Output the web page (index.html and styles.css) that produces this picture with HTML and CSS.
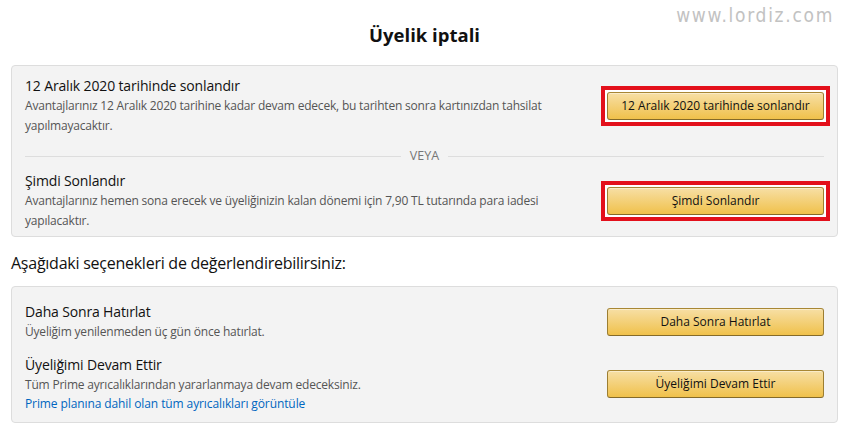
FILE: index.html
```html
<!DOCTYPE html>
<html lang="tr">
<head>
    <meta charset="UTF-8">
    <meta name="viewport" content="width=device-width, initial-scale=1.0">
    <title>Üyelik iptali</title>
    <link rel="stylesheet" href="styles.css">
</head>
<body>
    <div class="watermark">www.lordiz.com</div>

    <h1 class="page-title">Üyelik iptali</h1>

    <div class="panel panel-cancel">
        <div class="option">
            <div class="option-text">
                <div class="option-title">12 Aralık 2020 tarihinde sonlandır</div>
                <div class="option-desc">Avantajlarınız 12 Aralık 2020 tarihine kadar devam edecek, bu tarihten sonra kartınızdan tahsilat yapılmayacaktır.</div>
            </div>
            <div class="highlight">
                <button class="btn">12 Aralık 2020 tarihinde sonlandır</button>
            </div>
        </div>

        <div class="divider"><span>VEYA</span></div>

        <div class="option">
            <div class="option-text">
                <div class="option-title">Şimdi Sonlandır</div>
                <div class="option-desc">Avantajlarınız hemen sona erecek ve üyeliğinizin kalan dönemi için 7,90 TL tutarında para iadesi yapılacaktır.</div>
            </div>
            <div class="highlight">
                <button class="btn">Şimdi Sonlandır</button>
            </div>
        </div>
    </div>

    <h2 class="section-title">Aşağıdaki seçenekleri de değerlendirebilirsiniz:</h2>

    <div class="panel panel-other">
        <div class="option">
            <div class="option-text">
                <div class="option-title">Daha Sonra Hatırlat</div>
                <div class="option-desc">Üyeliğim yenilenmeden üç gün önce hatırlat.</div>
            </div>
            <div class="plain">
                <button class="btn">Daha Sonra Hatırlat</button>
            </div>
        </div>

        <div class="option option-last">
            <div class="option-text">
                <div class="option-title">Üyeliğimi Devam Ettir</div>
                <div class="option-desc">Tüm Prime ayrıcalıklarından yararlanmaya devam edeceksiniz.</div>
                <a class="option-link" href="#">Prime planına dahil olan tüm ayrıcalıkları görüntüle</a>
            </div>
            <div class="plain">
                <button class="btn">Üyeliğimi Devam Ettir</button>
            </div>
        </div>
    </div>
</body>
</html>
```

FILE: styles.css
```css
body {
    font-family: "Open Sans", Arial, sans-serif;
    margin: 0;
    padding: 0 12px 0 11px;
    background-color: #fff;
    color: #111;
}
.watermark {
    position: absolute;
    top: 4px;
    right: 16px;
    font-family: "DejaVu Sans Condensed", "DejaVu Sans", sans-serif;
    font-size: 19px;
    color: #c2c2c2;
    letter-spacing: 1.7px;
}
.page-title {
    margin: 0;
    padding-top: 23px;
    height: 42px;
    text-align: center;
    font-size: 18.5px;
    font-weight: 700;
    line-height: 24px;
}
.panel {
    background: #f3f3f3;
    border: 1px solid #ddd;
    border-radius: 4px;
    padding: 9px 13px 5px 13px;
}
.panel-other {
    padding: 14px 13px 9px 13px;
}
.option {
    display: flex;
    align-items: center;
    justify-content: space-between;
}
.option-last {
    margin-top: 12px;
}
.option-text {
    width: 545px;
}
.option-title {
    font-size: 14px;
    line-height: 21px;
    letter-spacing: -0.15px;
}
.option-desc {
    font-size: 12px;
    line-height: 20px;
    letter-spacing: -0.2px;
    color: #555;
}
.option-link {
    display: block;
    font-size: 12px;
    line-height: 18px;
    letter-spacing: -0.1px;
    color: #0066c0;
    text-decoration: none;
}
.highlight {
    border: 4px solid #e3101b;
    padding: 2px;
    margin-right: -6px;
    background: #fff;
    display: flex;
}
.plain {
    display: flex;
}
.btn {
    width: 217px;
    height: 28px;
    font-family: "Open Sans", Arial, sans-serif;
    font-size: 12px;
    color: #111;
    background: linear-gradient(to bottom, #f7dfa5, #f0c14b);
    border: 1px solid;
    border-color: #a88734 #9c7e31 #846a29;
    border-radius: 3px;
    box-shadow: inset 0 1px 0 rgba(255, 255, 255, 0.4);
    cursor: pointer;
    padding: 0;
}
.divider {
    display: flex;
    align-items: center;
    margin: 12px 0 6px;
    font-size: 12.5px;
    color: #767676;
    line-height: 16px;
}
.divider::before,
.divider::after {
    content: "";
    flex: 1;
    border-top: 1px solid #ddd;
}
.divider span {
    padding: 0 9px;
}
.section-title {
    margin: 0;
    padding: 15px 0 12px;
    font-size: 16px;
    font-weight: 400;
    line-height: 22px;
    letter-spacing: -0.25px;
}
```
